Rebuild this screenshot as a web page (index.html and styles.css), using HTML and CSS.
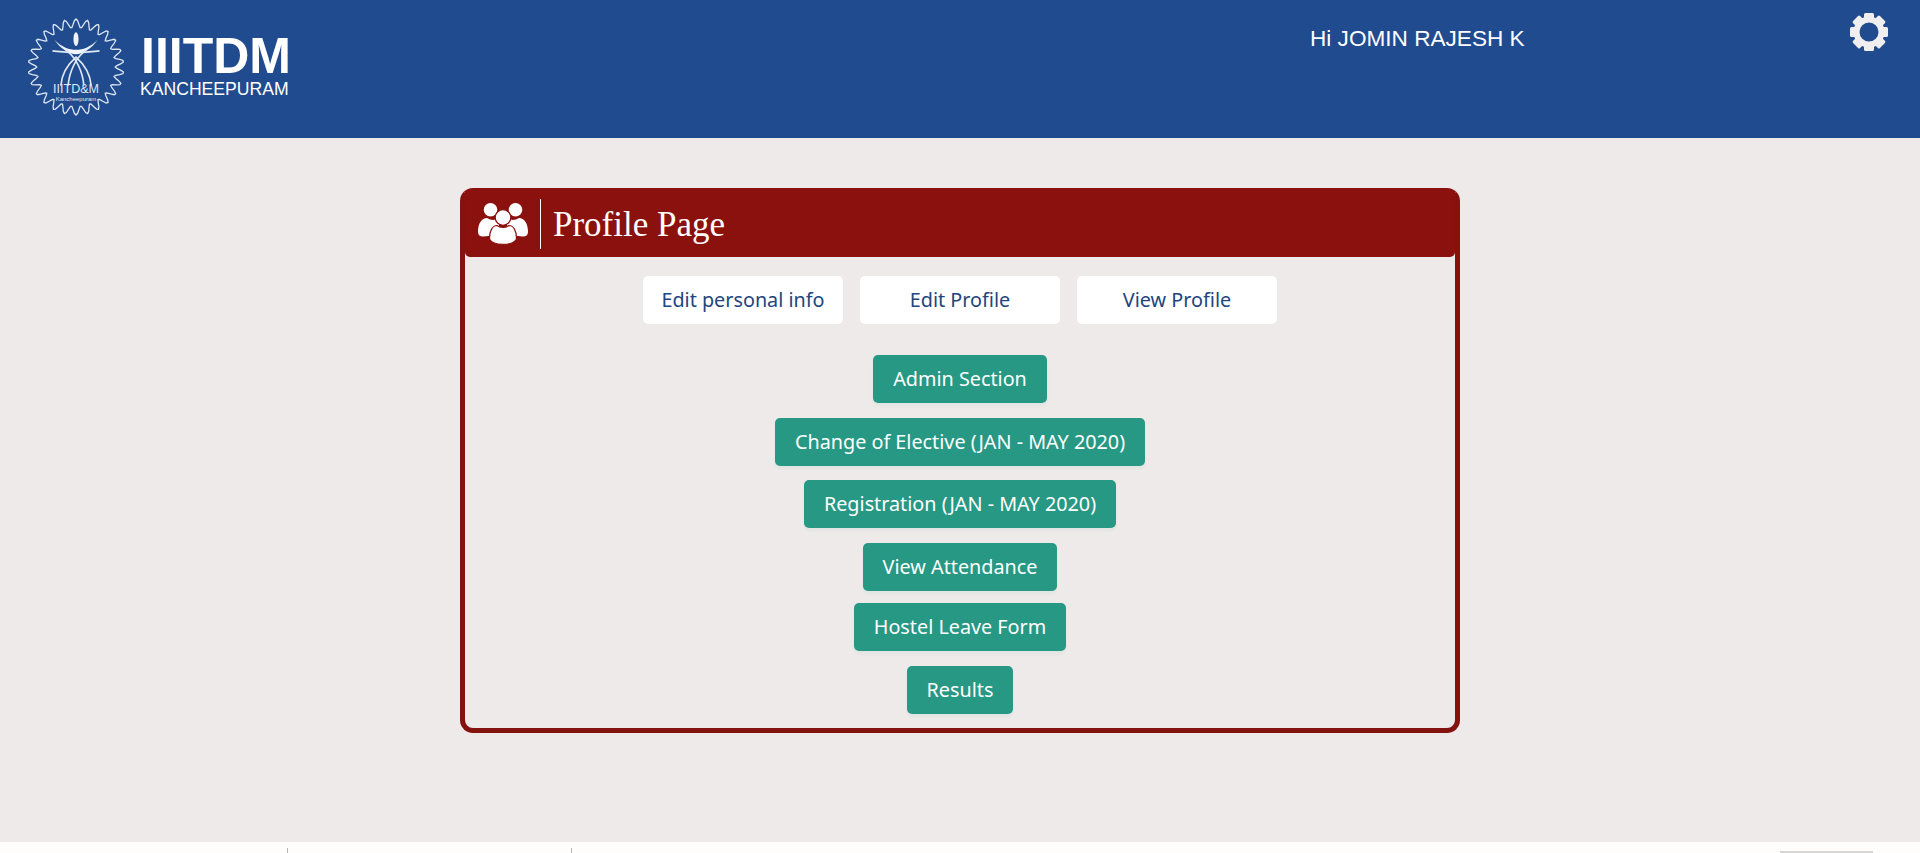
FILE: index.html
```html
<!DOCTYPE html>
<html lang="en">
<head>
    <meta charset="UTF-8">
    <title>Profile Page</title>
    <link rel="stylesheet" href="styles.css">
</head>
<body>
    <header class="topbar">
        <div class="brand">
            <svg class="brand-logo" viewBox="0 0 100 100" fill="none" stroke="#dfe8f5">
                <path id="ring" stroke-width="1.300" d=""/>
                <ellipse cx="50" cy="21.500" rx="2.600" ry="7" fill="#eef3fa" stroke="none"/>
                <path fill="#eef3fa" stroke="none" d="M28 22.500C36 30 43 32.500 50 32.500C57 32.500 64 30 72 22.500C65 32 57 37 50 37C43 37 35 32 28 22.500Z"/>
                <path stroke-width="1.700" d="M26 33.500C32 34.500 38 34.500 42.500 35C50 41 57 55 58 69"/>
                <path stroke-width="1.700" d="M74 33.500C68 34.500 62 34.500 57.500 35C50 41 43 55 42 69"/>
                <path stroke-width="1.700" d="M34.500 69C35.500 57 42 47 50 40C58 47 64.500 57 65.500 69"/>
            </svg>
            <span class="brand-logo-text">
                <span class="logo-big">IIITD&amp;M</span>
                <span class="logo-small">Kancheepuram</span>
            </span>
            <div class="brand-name">
                <div class="brand-title">IIITDM</div>
                <div class="brand-sub">KANCHEEPURAM</div>
            </div>
        </div>
        <div class="greeting">Hi JOMIN RAJESH K</div>
        <svg class="gear" viewBox="-19 -19 38 38">
            <circle r="12.500" fill="none" stroke="#f0eeee" stroke-width="6"/>
            <g fill="#f0eeee">
                <rect x="-5" y="-19" width="10" height="6" rx="1.500"/>
                <rect x="-5" y="-19" width="10" height="6" rx="1.500" transform="rotate(45)"/>
                <rect x="-5" y="-19" width="10" height="6" rx="1.500" transform="rotate(90)"/>
                <rect x="-5" y="-19" width="10" height="6" rx="1.500" transform="rotate(135)"/>
                <rect x="-5" y="-19" width="10" height="6" rx="1.500" transform="rotate(180)"/>
                <rect x="-5" y="-19" width="10" height="6" rx="1.500" transform="rotate(225)"/>
                <rect x="-5" y="-19" width="10" height="6" rx="1.500" transform="rotate(270)"/>
                <rect x="-5" y="-19" width="10" height="6" rx="1.500" transform="rotate(315)"/>
            </g>
        </svg>
    </header>

    <main class="content">
        <section class="panel">
            <div class="panel-head">
                <svg class="panel-icon" viewBox="0 0 50 42" fill="#fff">
                    <circle cx="12.500" cy="6.800" r="6.800"/>
                    <circle cx="37.500" cy="6.800" r="6.800"/>
                    <path d="M0 29C0 20 4 15 9 15C13 17.500 17 17.500 21 15V32L5 33.500C2 33.500 0 32 0 29Z"/>
                    <path d="M50 29C50 20 46 15 41 15C37 17.500 33 17.500 29 15V32L45 33.500C48 33.500 50 32 50 29Z"/>
                    <circle cx="25" cy="14.500" r="7.800" stroke="#8b110e" stroke-width="1.200"/>
                    <path stroke="#8b110e" stroke-width="1.200" d="M11.500 35C11.500 28 14.500 22.500 19 22.500C22 25 28 25 31 22.500C35.500 22.500 38.500 28 38.500 35C38.500 43.500 11.500 43.500 11.500 35Z"/>
                </svg>
                <h1 class="panel-title">Profile Page</h1>
            </div>
            <div class="panel-body">
                <div class="white-row">
                    <a class="btn btn-white">Edit personal info</a>
                    <a class="btn btn-white">Edit Profile</a>
                    <a class="btn btn-white">View Profile</a>
                </div>
                <div class="green-list">
                    <a class="btn btn-green">Admin Section</a>
                    <a class="btn btn-green">Change of Elective (JAN - MAY 2020)</a>
                    <a class="btn btn-green">Registration (JAN - MAY 2020)</a>
                    <a class="btn btn-green">View Attendance</a>
                    <a class="btn btn-green btn-tight">Hostel Leave Form</a>
                    <a class="btn btn-green">Results</a>
                </div>
            </div>
        </section>
    </main>

    <footer class="bottom">
        <span class="tick tick-one"></span>
        <span class="tick tick-two"></span>
        <span class="bottom-box"></span>
    </footer>

    <script>
        // gear shaped wavy ring around the logo
        var d = '';
        for (var i = 0; i <= 360; i += 2) {
            var a = i * Math.PI / 180;
            var r = 44.5 + 4.5 * Math.cos(a * 26);
            var x = 50 + r * Math.sin(a);
            var y = 50 - r * Math.cos(a);
            d += (i === 0 ? 'M' : 'L') + x.toFixed(2) + ' ' + y.toFixed(2);
        }
        document.getElementById('ring').setAttribute('d', d + 'Z');
    </script>
</body>
</html>
```

FILE: styles.css
```css
html, body {
    height: 100%;
}
body {
    margin: 0;
    height: 853px;
    overflow: hidden;
    display: flex;
    flex-direction: column;
    background-color: #eeeae9;
    font-family: "Noto Sans", sans-serif;
}
.topbar {
    position: relative;
    height: 138px;
    flex: none;
    background-color: #214b8f;
    color: #fff;
    font-family: "Liberation Sans", Arial, sans-serif;
}
.brand {
    position: absolute;
    left: 27px;
    top: 18px;
    display: flex;
}
.brand-logo {
    width: 98px;
    height: 98px;
}
.brand-logo-text {
    position: absolute;
    left: 0;
    top: 65px;
    width: 98px;
    text-align: center;
    color: #dfe8f5;
    line-height: 1;
}
.logo-big {
    display: block;
    font-size: 12.500px;
}
.logo-small {
    display: block;
    font-size: 6px;
}
.brand-name {
    margin-left: 15px;
    padding-top: 17px;
}
.brand-title {
    margin-left: 1px;
    font-size: 50px;
    font-weight: bold;
    line-height: 43px;
}
.brand-sub {
    font-size: 17.600px;
    line-height: 22px;
}
.greeting {
    position: absolute;
    left: 1310px;
    top: 24px;
    font-size: 22.600px;
    line-height: 30px;
}
.gear {
    position: absolute;
    left: 1850px;
    top: 13px;
    width: 38px;
    height: 38px;
}
.content {
    flex: 1;
    padding-top: 50px;
}
.panel {
    box-sizing: border-box;
    width: 1000px;
    height: 545px;
    margin: 0 auto;
    border: 5px solid #84120f;
    border-top-color: #8b110e;
    border-radius: 13px;
    background-color: #eeeae9;
}
.panel-head {
    box-sizing: border-box;
    display: flex;
    align-items: center;
    height: 64px;
    padding: 0 0 2px 13px;
    background-color: #8b110e;
    border-radius: 0 0 5px 5px;
}
.panel-icon {
    width: 50px;
    height: 42px;
}
.panel-title {
    margin: 0 0 0 12px;
    padding-left: 12px;
    border-left: 1px solid #fff;
    height: 50px;
    line-height: 52px;
    color: #fff;
    font-family: "Liberation Serif", serif;
    font-size: 35px;
    font-weight: normal;
}
.panel-body {
    padding-top: 19px;
}
.white-row {
    display: flex;
    justify-content: center;
    gap: 17px;
}
.green-list {
    display: flex;
    flex-direction: column;
    align-items: center;
    margin-top: 31px;
    gap: 14.600px;
}
.btn {
    box-sizing: border-box;
    display: block;
    height: 48px;
    line-height: 48px;
    border-radius: 5px;
    font-size: 19.800px;
    text-align: center;
}
.btn-white {
    width: 200px;
    background-color: #fff;
    color: #22457f;
}
.btn-green {
    padding: 0 20px;
    background-color: #269884;
    color: #fff;
    box-shadow: 0 3px 3px rgba(40, 154, 133, 0.06);
}
.btn-tight {
    margin-top: -2.400px;
}
.bottom {
    position: relative;
    height: 11px;
    flex: none;
    background-color: #fefdfc;
}
.tick {
    position: absolute;
    top: 6px;
    width: 1px;
    height: 5px;
    background-color: #b5b5b5;
}
.tick-one {
    left: 287px;
}
.tick-two {
    left: 571px;
}
.bottom-box {
    position: absolute;
    left: 1780px;
    top: 9px;
    width: 93px;
    height: 2px;
    background-color: #d6d6d6;
}
```
